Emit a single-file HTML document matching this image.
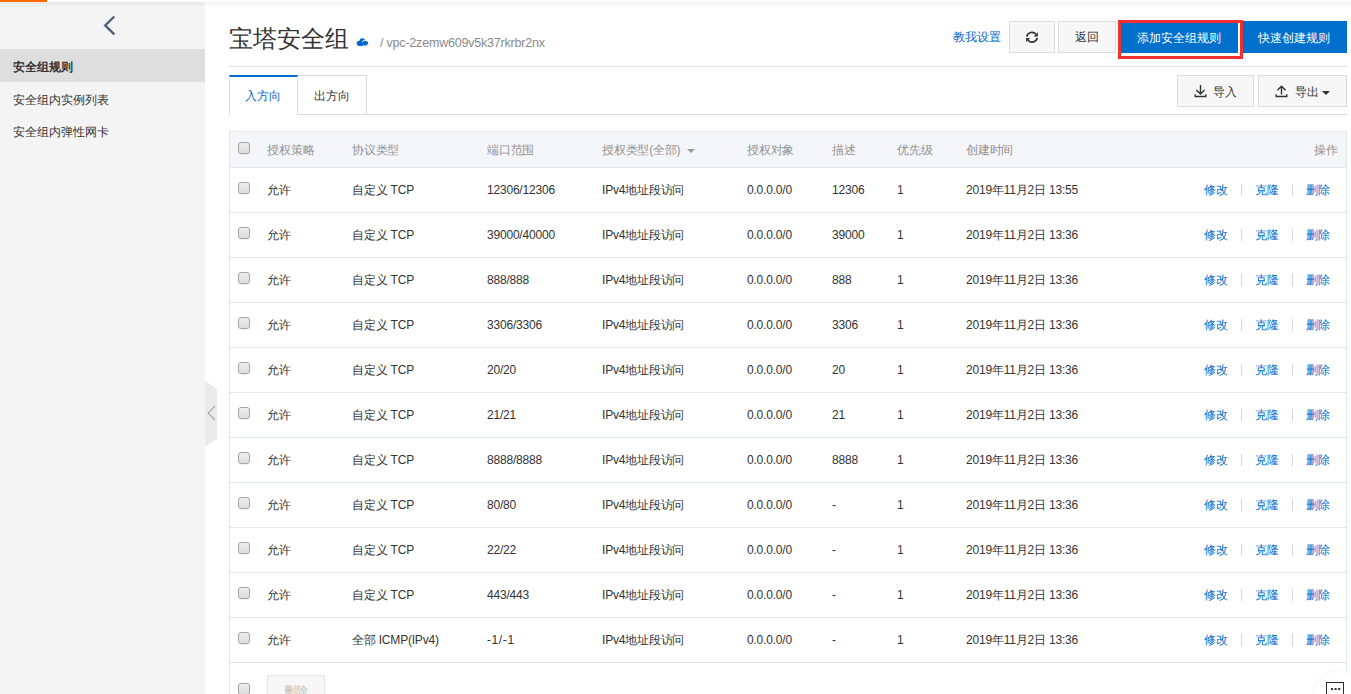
<!DOCTYPE html>
<html><head><meta charset="utf-8"><style>
*{margin:0;padding:0;box-sizing:border-box}
html,body{width:1351px;height:694px;overflow:hidden;background:#fff;font-family:"Liberation Sans",sans-serif;font-size:12px;color:#333;position:relative}
.abs{position:absolute}
#topbar{position:absolute;left:0;top:0;width:1351px;height:2px;background:#fff}
#topbar .o{position:absolute;left:0;top:0;width:47px;height:2px;background:#ff6a00}
#shadow{position:absolute;left:0;top:2px;width:1351px;height:5px;background:linear-gradient(rgba(0,0,0,0.055),rgba(0,0,0,0));z-index:5}
#side{position:absolute;left:0;top:2px;width:205px;height:692px;background:#f4f4f4}
#side .back{position:absolute;left:100px;top:13px}
#side .item{position:absolute;left:0;width:205px;height:33px;line-height:33px;padding-left:13px;color:#333}
#side .item.act{background:#dedede;font-weight:bold}
#handle{position:absolute;left:205px;top:381px}
.title{position:absolute;left:229px;top:22px;font-size:24px;line-height:32px;color:#333}
.vpc{position:absolute;left:380px;top:35px;font-size:12.5px;line-height:16px;color:#8a8a8a}
.hr{position:absolute;height:1px;background:#e2e2e2}
.btn{position:absolute;height:32px;line-height:30px;text-align:center;border:1px solid #dcdcdc;background:#f7f7f7;color:#333;font-size:12px}
.btnp{position:absolute;height:32px;line-height:32px;text-align:center;background:#0070cc;color:#fff;font-size:12px}
.link{color:#0068cc}
.tab{position:absolute;top:75px;height:40px;line-height:38px;text-align:center;border:1px solid #dcdcdc;background:#fff}
.tab.act{border-top:2px solid #0070cc;border-bottom:none;color:#0068cc;line-height:36px;height:40px;z-index:2}
#tbl{position:absolute;left:229px;top:131px;width:1118px;height:600px;border-left:1px solid #e3e8ee;border-right:1px solid #e3e8ee;border-top:1px solid #e3e8ee}
.thead{position:absolute;left:229px;top:131px;width:1118px;height:37px;background:#f5f6fa;border:1px solid #e3e8ee;color:#929292}
.row{position:absolute;left:229px;width:1118px;height:45px;border-bottom:1px solid #e3e8ee;border-left:1px solid #e3e8ee;border-right:1px solid #e3e8ee}
.row span,.thead span{position:absolute;top:0;line-height:44px;white-space:nowrap}
.thead span{line-height:36px}
.c2,.c3,.c4,.c5,.c6,.c8,.vpc{letter-spacing:-0.2px}
.c1{left:37px}.c2{left:122px}.c3{left:257px}.c4{left:372px}.c5{left:517px}.c6{left:602px}.c7{left:667px}.c8{left:736px}
.ops{right:16px}
.ops a{color:#0068cc}
.ops b{display:inline-block;width:1px;height:12px;background:#d3d8df;margin:0 13px;vertical-align:-2px}
.cb{position:absolute;left:8px;top:14px;width:12px;height:12px;border:1px solid #a6a6a6;border-radius:3px;background:linear-gradient(#eeeeee,#dddddd);box-shadow:0 0.5px 0.5px rgba(0,0,0,0.12)}
.thead .cb{top:10px}

</style></head><body>
<div id="topbar"><div class="o"></div></div>
<div id="side">
  <svg class="back" width="20" height="24" viewBox="0 0 20 24"><path d="M14.3 1.5 L5.2 10.4 L14.3 19.3" fill="none" stroke="#4f607a" stroke-width="2.4"/></svg>
  <div class="item act" style="top:47px"><span style="position:relative;top:1.5px">安全组规则</span></div>
  <div class="item" style="top:80px"><span style="position:relative;top:1.5px">安全组内实例列表</span></div>
  <div class="item" style="top:112px"><span style="position:relative;top:1.5px">安全组内弹性网卡</span></div>
</div>
<div id="shadow"></div>
<svg id="handle" width="12" height="66" viewBox="0 0 12 66"><path d="M0 0 L12 8 L12 58 L0 66 Z" fill="#ebebeb"/><path d="M10 25 L3 32 L10 39" fill="none" stroke="#a6a6a6" stroke-width="1.1"/></svg>

<div class="title" style="top:23px">宝塔安全组</div>
<svg class="abs" style="left:356px;top:37px" width="13" height="10" viewBox="0 0 13 10"><circle cx="3.3" cy="6.3" r="2.6" fill="#0068cc"/><circle cx="6.4" cy="4.1" r="2.8" fill="#0068cc"/><rect x="3" y="5" width="5" height="3.9" fill="#0068cc"/><circle cx="9.6" cy="6.4" r="2.6" fill="#0068cc"/><path d="M6.3 5.2 A2.4 2.4 0 0 1 10.8 4.6 M11.6 7.2 A2.4 2.4 0 0 1 7.2 8" fill="none" stroke="#fff" stroke-width="1"/></svg>
<div class="vpc">/ vpc-2zemw609v5k37rkrbr2nx</div>

<div class="abs link" style="left:953px;top:29px;line-height:16px">教我设置</div>
<div class="btn" style="left:1009px;top:21px;width:46px">
 <svg style="position:absolute;left:15px;top:8px" width="14" height="14" viewBox="0 0 14 14"><path d="M1.8 6.6 A5.2 5.2 0 0 1 10.9 4.2" fill="none" stroke="#333" stroke-width="1.7"/><path d="M12.9 2.2 L12.9 6.4 L8.7 6.4 Z" fill="#333"/><path d="M12.2 7.8 A5.2 5.2 0 0 1 3.1 10.2" fill="none" stroke="#333" stroke-width="1.7"/><path d="M1.1 12.2 L1.1 8 L5.3 8 Z" fill="#333"/></svg>
</div>
<div class="btn" style="left:1058px;top:21px;width:58px">返回</div>
<div class="btnp" style="left:1119px;top:21px;width:119px"><span style="position:relative;top:1px">添加安全组规则</span></div>
<div class="btnp" style="left:1243px;top:21px;width:104px"><span style="position:relative;top:1px;left:-1px">快速创建规则</span></div>
<div class="abs" style="left:1118px;top:20px;width:125px;height:39px;border:3px solid #f42f2f"></div>
<div class="hr" style="left:229px;top:66px;width:1118px"></div>

<div class="hr" style="left:229px;top:114px;width:1118px;background:#dcdcdc"></div>
<div class="tab act" style="left:229px;width:69px"><span style="position:relative;top:1px;left:-1px">入方向</span></div>
<div class="tab" style="left:297px;width:70px"><span style="position:relative;top:1px">出方向</span></div>

<div class="btn" style="left:1177px;top:75px;width:77px">
 <span style="position:absolute;left:35px;top:1px">导入</span>
</div>
<svg class="abs" style="left:1193px;top:84px" width="14" height="14" viewBox="0 0 14 14"><path d="M7.5 1 V10 M3.4 5.9 L7.5 10 L11.6 5.9 M2.2 10.2 V12.5 H12.8 V10.2" fill="none" stroke="#333" stroke-width="1.4"/></svg>
<div class="btn" style="left:1258px;top:75px;width:89px">
 <span style="position:absolute;left:36px;top:1px">导出</span>
</div>
<svg class="abs" style="left:1275px;top:84px" width="14" height="14" viewBox="0 0 14 14"><path d="M6.5 2.2 V10.5 M2.4 6.3 L6.5 2.2 L10.6 6.3 M1.2 10.2 V12.5 H11.8 V10.2" fill="none" stroke="#333" stroke-width="1.4"/></svg>
<svg class="abs" style="left:1322px;top:91px" width="8" height="4" viewBox="0 0 8 4"><path d="M0 0 H8 L4 4 Z" fill="#333"/></svg>

<div id="tbl"></div>
<div class="thead">
<i class="cb"></i><span class="c1">授权策略</span><span class="c2">协议类型</span><span class="c3">端口范围</span><span class="c4">授权类型(全部)</span>
<svg style="position:absolute;left:457px;top:17px" width="8" height="4" viewBox="0 0 8 4"><path d="M0 0 H8 L4 4 Z" fill="#999"/></svg>
<span class="c5">授权对象</span><span class="c6">描述</span><span class="c7">优先级</span><span class="c8">创建时间</span><span style="right:8px">操作</span>
</div>
<div class="row" style="top:168px">
<i class="cb"></i><span class="c1">允许</span><span class="c2">自定义 TCP</span><span class="c3">12306/12306</span><span class="c4">IPv4地址段访问</span><span class="c5">0.0.0.0/0</span><span class="c6">12306</span><span class="c7">1</span><span class="c8">2019年11月2日 13:55</span><span class="ops"><a>修改</a><b></b><a>克隆</a><b></b><a>删除</a></span>
</div>
<div class="row" style="top:213px">
<i class="cb"></i><span class="c1">允许</span><span class="c2">自定义 TCP</span><span class="c3">39000/40000</span><span class="c4">IPv4地址段访问</span><span class="c5">0.0.0.0/0</span><span class="c6">39000</span><span class="c7">1</span><span class="c8">2019年11月2日 13:36</span><span class="ops"><a>修改</a><b></b><a>克隆</a><b></b><a>删除</a></span>
</div>
<div class="row" style="top:258px">
<i class="cb"></i><span class="c1">允许</span><span class="c2">自定义 TCP</span><span class="c3">888/888</span><span class="c4">IPv4地址段访问</span><span class="c5">0.0.0.0/0</span><span class="c6">888</span><span class="c7">1</span><span class="c8">2019年11月2日 13:36</span><span class="ops"><a>修改</a><b></b><a>克隆</a><b></b><a>删除</a></span>
</div>
<div class="row" style="top:303px">
<i class="cb"></i><span class="c1">允许</span><span class="c2">自定义 TCP</span><span class="c3">3306/3306</span><span class="c4">IPv4地址段访问</span><span class="c5">0.0.0.0/0</span><span class="c6">3306</span><span class="c7">1</span><span class="c8">2019年11月2日 13:36</span><span class="ops"><a>修改</a><b></b><a>克隆</a><b></b><a>删除</a></span>
</div>
<div class="row" style="top:348px">
<i class="cb"></i><span class="c1">允许</span><span class="c2">自定义 TCP</span><span class="c3">20/20</span><span class="c4">IPv4地址段访问</span><span class="c5">0.0.0.0/0</span><span class="c6">20</span><span class="c7">1</span><span class="c8">2019年11月2日 13:36</span><span class="ops"><a>修改</a><b></b><a>克隆</a><b></b><a>删除</a></span>
</div>
<div class="row" style="top:393px">
<i class="cb"></i><span class="c1">允许</span><span class="c2">自定义 TCP</span><span class="c3">21/21</span><span class="c4">IPv4地址段访问</span><span class="c5">0.0.0.0/0</span><span class="c6">21</span><span class="c7">1</span><span class="c8">2019年11月2日 13:36</span><span class="ops"><a>修改</a><b></b><a>克隆</a><b></b><a>删除</a></span>
</div>
<div class="row" style="top:438px">
<i class="cb"></i><span class="c1">允许</span><span class="c2">自定义 TCP</span><span class="c3">8888/8888</span><span class="c4">IPv4地址段访问</span><span class="c5">0.0.0.0/0</span><span class="c6">8888</span><span class="c7">1</span><span class="c8">2019年11月2日 13:36</span><span class="ops"><a>修改</a><b></b><a>克隆</a><b></b><a>删除</a></span>
</div>
<div class="row" style="top:483px">
<i class="cb"></i><span class="c1">允许</span><span class="c2">自定义 TCP</span><span class="c3">80/80</span><span class="c4">IPv4地址段访问</span><span class="c5">0.0.0.0/0</span><span class="c6">-</span><span class="c7">1</span><span class="c8">2019年11月2日 13:36</span><span class="ops"><a>修改</a><b></b><a>克隆</a><b></b><a>删除</a></span>
</div>
<div class="row" style="top:528px">
<i class="cb"></i><span class="c1">允许</span><span class="c2">自定义 TCP</span><span class="c3">22/22</span><span class="c4">IPv4地址段访问</span><span class="c5">0.0.0.0/0</span><span class="c6">-</span><span class="c7">1</span><span class="c8">2019年11月2日 13:36</span><span class="ops"><a>修改</a><b></b><a>克隆</a><b></b><a>删除</a></span>
</div>
<div class="row" style="top:573px">
<i class="cb"></i><span class="c1">允许</span><span class="c2">自定义 TCP</span><span class="c3">443/443</span><span class="c4">IPv4地址段访问</span><span class="c5">0.0.0.0/0</span><span class="c6">-</span><span class="c7">1</span><span class="c8">2019年11月2日 13:36</span><span class="ops"><a>修改</a><b></b><a>克隆</a><b></b><a>删除</a></span>
</div>
<div class="row" style="top:618px;border-bottom-color:#e0e0e0">
<i class="cb"></i><span class="c1">允许</span><span class="c2">全部 ICMP(IPv4)</span><span class="c3" style="letter-spacing:0.6px">-1/-1</span><span class="c4">IPv4地址段访问</span><span class="c5">0.0.0.0/0</span><span class="c6">-</span><span class="c7">1</span><span class="c8">2019年11月2日 13:36</span><span class="ops"><a>修改</a><b></b><a>克隆</a><b></b><a>删除</a></span>
</div>
<i class="cb" style="left:238px;top:683px"></i>
<div class="btn" style="left:267px;top:675px;width:58px;color:#bbb;border-color:#e5e5e5">删除</div>

<div class="abs" style="left:1314px;top:670.5px;width:48px;height:48px;border-radius:50%;background:#fff;box-shadow:0 0 2px rgba(0,0,0,0.10)"></div>
<div class="abs" style="left:1326px;top:682px;width:18px;height:16px;border:1.6px solid #2b2b2b"></div>
<div class="abs" style="left:1330.7px;top:687.7px;width:2px;height:2px;background:#2b2b2b;box-shadow:3.6px 0 #2b2b2b,7.2px 0 #2b2b2b"></div>
</body></html>
